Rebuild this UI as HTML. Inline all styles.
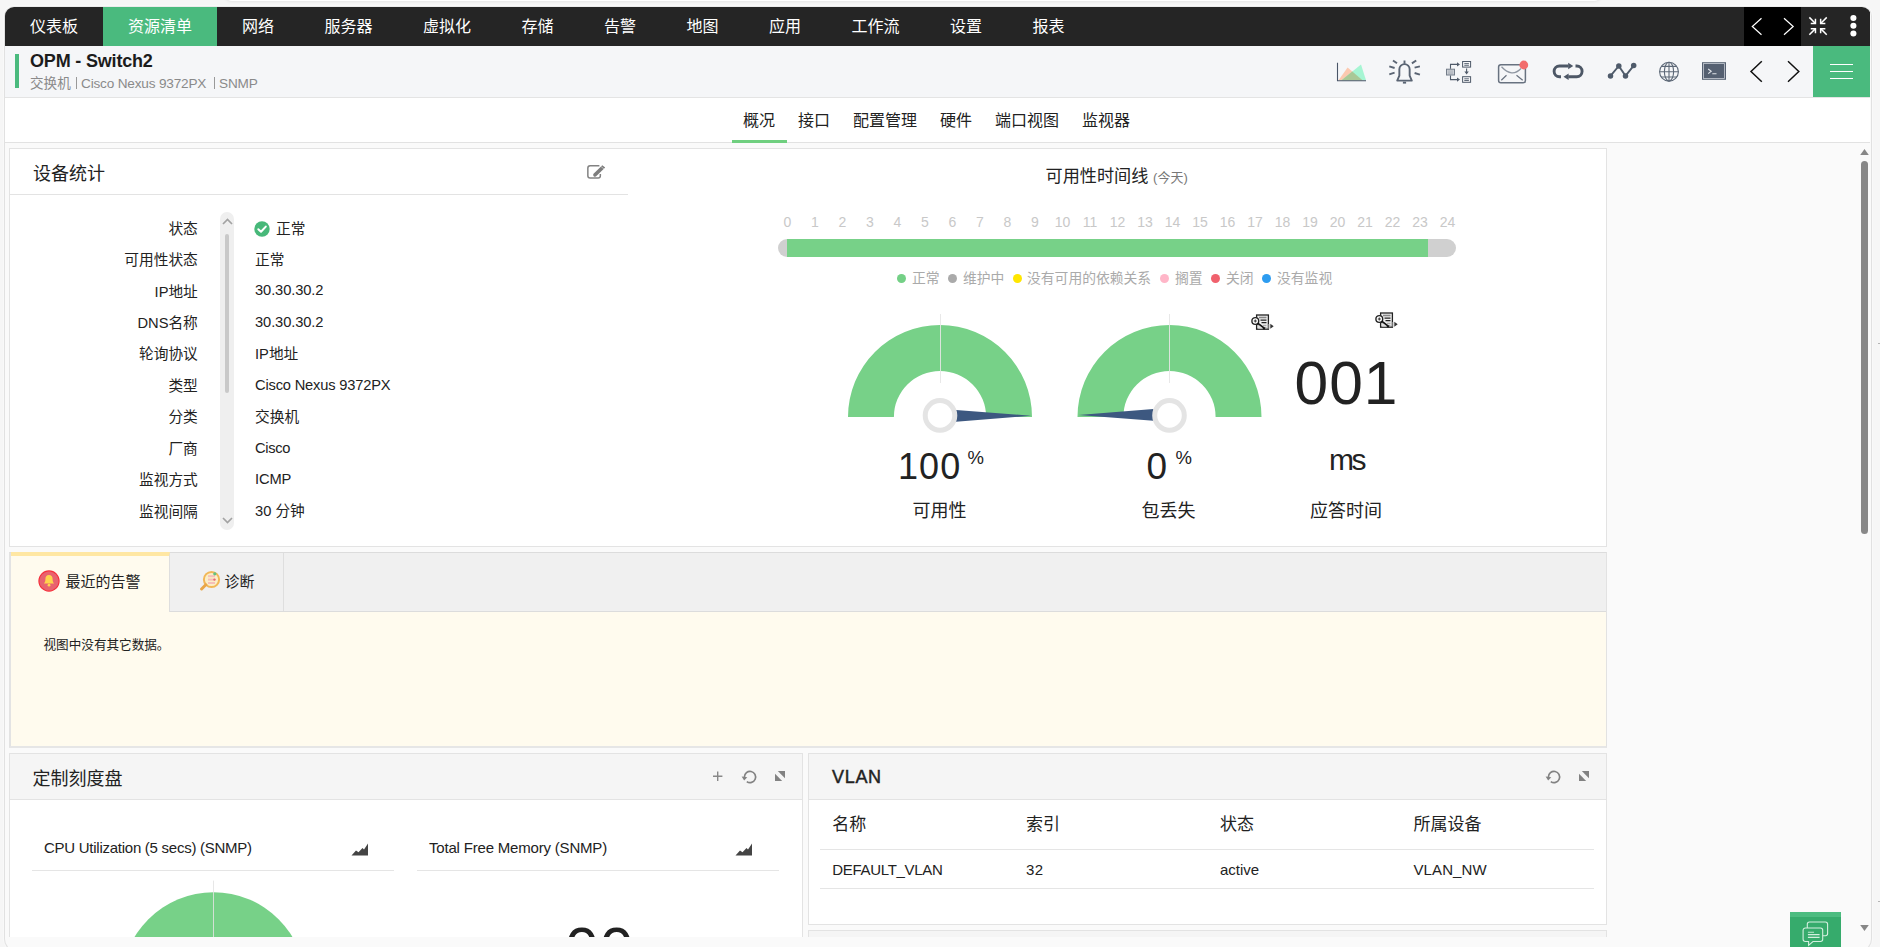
<!DOCTYPE html>
<html lang="zh-CN">
<head>
<meta charset="utf-8">
<title>OPM - Switch2</title>
<style>
*{box-sizing:border-box;margin:0;padding:0}
html,body{width:1880px;height:947px;overflow:hidden;background:#f6f6f6;}
body{font-family:"Liberation Sans","Noto Sans CJK SC",sans-serif;color:#222;position:relative;font-size:15px}
.abs{position:absolute}
#topbit{position:absolute;left:224px;top:-9px;width:1378px;height:10px;background:#fff;border-radius:0 0 8px 8px;box-shadow:0 1px 3px rgba(0,0,0,.07)}
#frame{position:absolute;left:4px;top:6px;width:1868px;height:946px;border:1px solid #e1e1e1;border-top-color:#ececec;border-radius:10px 10px 13px 13px;background:#fafafa;overflow:hidden;box-shadow:0 0 0 1px rgba(255,255,255,.4)}
#inner{position:absolute;left:0;top:0;width:1865px;height:930px;overflow:hidden;background:#fafafa}
/* nav */
#nav{position:absolute;left:0;top:0;width:1865px;height:39px;background:#252525;color:#fff;font-size:16px;line-height:40px;white-space:nowrap}
#nav .it{position:absolute;top:0;height:39px;padding:0 25px;font-weight:400}
#nav .it.act{background:#4aba7e}
#navr{position:absolute;left:1739px;top:0;width:57px;height:39px;background:#000}
/* header */
#hdr{position:absolute;left:0;top:39px;width:1865px;height:52px;background:#f5f6f8;border-bottom:1px solid #e4e4e4}
#hdr .bar{position:absolute;left:10px;top:8px;width:4px;height:34px;background:#4aba7e}
#hdr .ttl{position:absolute;left:25px;top:2.5px;font-size:18px;font-weight:bold;line-height:24px;color:#1c1c1c;white-space:nowrap;letter-spacing:-0.18px}
#hdr .sub{position:absolute;left:25px;top:29px;font-size:13.6px;line-height:18px;color:#8a8a8a;white-space:nowrap}
#hdr .lat{letter-spacing:-0.18px}
#hdr .sbar{position:absolute;top:30.500px;width:1px;height:12px;background:#999}
#hdr .burger{position:absolute;left:1808px;top:0;width:57px;height:51px;background:#4aba7e}
/* tabs */
#tabs{position:absolute;left:0;top:91px;width:1865px;height:45px;background:#fff;border-bottom:1px solid #e2e2e2;font-size:16px;white-space:nowrap}
#tabs .t{position:absolute;top:0;height:45px;line-height:46px;color:#222}
#tabs .ul{position:absolute;left:727px;top:42px;width:55px;height:3px;background:#6fcf7f}
.panel{position:absolute;background:#fff;border:1px solid #e3e3e3}

/* header icons */
.hic{position:absolute;overflow:visible}
/* panel1 */
#p1{left:4px;top:141px;width:1598px;height:399px}
#p1 .h{position:absolute;left:0;top:0;width:617.5px;height:46px;border-bottom:1px solid #e3e3e3}
.ptitle{position:absolute;font-size:18px;line-height:24px;color:#222;white-space:nowrap}
.row{position:absolute;left:0;width:600px;height:22px;line-height:22px;font-size:14.7px;white-space:nowrap;color:#222}
.row .k{position:absolute;right:412.2px;top:0;text-align:right}
.row .v{position:absolute;left:245px;top:0}
#sb{position:absolute;left:210px;top:63.3px;width:13.5px;height:318px;border-radius:7px;background:#efefef}
#sb .th{position:absolute;left:5px;top:22px;width:4px;height:159px;border-radius:2px;background:#c9c9c9}
.tl{position:absolute;top:64.7px;width:28px;text-align:center;font-size:14px;line-height:16px;color:#c8c8c8}
.lg{position:absolute;top:120.8px;font-size:13.8px;line-height:18px;color:#aaa;white-space:nowrap}
.dot{position:absolute;top:125.2px;width:9px;height:9px;border-radius:50%}
.big{position:absolute;white-space:nowrap;color:#222}
.glab{position:absolute;font-size:18px;line-height:24px;white-space:nowrap;color:#222;text-align:center}
/* alarms */
#p2{left:4px;top:545px;width:1598px;height:196px;background:#fffbee;border:1px solid #e2e2e2;border-left:2px solid #e3e3e3;border-bottom:2px solid #e6e6e6;border-top-color:#dcdcdc}
#p2 .hd{position:absolute;left:0;top:0;width:1595px;height:59px;background:#f0f0f0;border-bottom:1px solid #dcdcdc}
#p2 .t1{position:absolute;left:0;top:-1px;width:159px;height:60px;background:#fffbee;border-top:4px solid #ffe7a3;border-right:1px solid #dedede}
#p2 .t2{position:absolute;left:159px;top:0;width:114px;height:58px;border-right:1px solid #dedede}
.tt{position:absolute;font-size:15px;line-height:20px;white-space:nowrap;color:#222}
/* bottom */
#p3{left:4px;top:746px;width:794px;height:200px}
#p4{left:803px;top:746px;width:799px;height:172px}
#p5{left:803px;top:923px;width:799px;height:60px}
.ph{position:absolute;left:0;top:0;right:0;height:46px;background:#f5f5f5;border-bottom:1px solid #e3e3e3}
.wt{position:absolute;font-size:15px;line-height:20px;white-space:nowrap;color:#222}
.th1{position:absolute;font-size:17px;line-height:24px;color:#222;white-space:nowrap}
.td1{position:absolute;font-size:15px;line-height:20px;color:#222;white-space:nowrap}
.hl{position:absolute;height:1px;background:#e5e5e5}
#chat{position:absolute;left:1785px;top:905px;width:51px;height:45px;background:#36ab6c}
#chat:before{content:"";position:absolute;left:0;top:0;width:51px;height:5px;background:#4cbc80}
#vsb{position:absolute;left:1853px;top:137px;width:12px;height:800px}
</style>
</head>
<body>
<div id="topbit"></div>
<div id="frame">
<div id="inner">
  <div id="nav">
    <div class="it" style="left:0px">仪表板</div>
    <div class="it act" style="left:98px;width:114px">资源清单</div>
    <div class="it" style="left:212px">网络</div>
    <div class="it" style="left:294.5px">服务器</div>
    <div class="it" style="left:393px">虚拟化</div>
    <div class="it" style="left:491.5px">存储</div>
    <div class="it" style="left:574px">告警</div>
    <div class="it" style="left:656.5px">地图</div>
    <div class="it" style="left:739px">应用</div>
    <div class="it" style="left:821.5px">工作流</div>
    <div class="it" style="left:920px">设置</div>
    <div class="it" style="left:1002.5px">报表</div>
    <div id="navr"></div>
  </div>
  <div id="hdr">
    <div class="bar"></div>
    <div class="ttl">OPM - Switch2</div>
    <div class="sub">交换机</div><div class="sbar" style="left:71px"></div><div class="sub lat" style="left:76px">Cisco Nexus 9372PX</div><div class="sbar" style="left:209px"></div><div class="sub lat" style="left:214px">SNMP</div>
    <div class="burger"></div>
  </div>
  <div id="tabs">
    <div class="t" style="left:738px">概况</div>
    <div class="t" style="left:793px">接口</div>
    <div class="t" style="left:848px">配置管理</div>
    <div class="t" style="left:935px">硬件</div>
    <div class="t" style="left:990px">端口视图</div>
    <div class="t" style="left:1077px">监视器</div>
    <div class="ul"></div>
  </div>
  
<div class="panel" id="p1">
  <div class="h"></div>
  <div class="ptitle" style="left:23px;top:12.8px">设备统计</div>
  <svg class="abs" style="left:576px;top:14px" width="22" height="18" viewBox="0 0 22 18"><path d="M13.4 2.750 H4.100 a2.250 2.250 0 0 0 -2.250 2.250 V12.800 a2.250 2.250 0 0 0 2.250 2.250 H12.100 a2.250 2.250 0 0 0 2.250 -2.250 V11" fill="none" stroke="#828282" stroke-width="1.500"/><path d="M7.300 11 L16.300 2.200 L19.200 4.600 L9.900 13.600 L6.900 14.200 Z" fill="#7d7d7d"/><path d="M15 3.500 L17.900 5.900" stroke="#d8d8d8" stroke-width=".7"/><path d="M7.200 12.300 L8.600 13.700 L6.900 14.200 Z" fill="#eee"/></svg>
  
<div class="row" style="top:68.60px"><span class="k">状态</span><span class="v" style="left:266px">正常</span><svg class="abs" style="left:244px;top:3px" width="16" height="16" viewBox="0 0 16 16"><circle cx="8" cy="8" r="7.7" fill="#47b879"/><path d="M4.3 8.2 L7 10.800 L11.800 5.600" fill="none" stroke="#fff" stroke-width="2" stroke-linecap="round" stroke-linejoin="round"/></svg></div>
<div class="row" style="top:100.07px"><span class="k">可用性状态</span><span class="v">正常</span></div>
<div class="row" style="top:131.54px"><span class="k">IP地址</span><span class="v" style="top:-1.3px;letter-spacing:-0.1px;">30.30.30.2</span></div>
<div class="row" style="top:163.01px"><span class="k">DNS名称</span><span class="v" style="top:-1.3px;letter-spacing:-0.1px;">30.30.30.2</span></div>
<div class="row" style="top:194.48px"><span class="k">轮询协议</span><span class="v">IP地址</span></div>
<div class="row" style="top:225.95px"><span class="k">类型</span><span class="v" style="top:-1.3px;letter-spacing:-0.19px;">Cisco Nexus 9372PX</span></div>
<div class="row" style="top:257.42px"><span class="k">分类</span><span class="v">交换机</span></div>
<div class="row" style="top:288.89px"><span class="k">厂商</span><span class="v" style="top:-1.3px;letter-spacing:-0.3px;">Cisco</span></div>
<div class="row" style="top:320.36px"><span class="k">监视方式</span><span class="v" style="top:-1.3px;letter-spacing:-0.1px;">ICMP</span></div>
<div class="row" style="top:351.83px"><span class="k">监视间隔</span><span class="v" style="top:-0.5px;">30 分钟</span></div>
  <div id="sb"><div class="th"></div>
    <svg class="abs" style="left:1.5px;top:6px" width="11" height="7" viewBox="0 0 11 7"><path d="M1 6 L5.500 1.500 L10 6" fill="none" stroke="#a3a3a3" stroke-width="1.700"/></svg>
    <svg class="abs" style="left:1.5px;top:304.500px" width="11" height="7" viewBox="0 0 11 7"><path d="M1 1 L5.500 5.500 L10 1" fill="none" stroke="#a3a3a3" stroke-width="1.700"/></svg>
  </div>
  <div class="abs" style="left:1035.5px;top:15px;font-size:17.15px;line-height:24px;white-space:nowrap;color:#222">可用性时间线 <span style="font-size:13px;color:#777">(今天)</span></div>
  <div class="tl" style="left:763.5px">0</div><div class="tl" style="left:791px">1</div><div class="tl" style="left:818.5px">2</div><div class="tl" style="left:846px">3</div><div class="tl" style="left:873.5px">4</div><div class="tl" style="left:901px">5</div><div class="tl" style="left:928.5px">6</div><div class="tl" style="left:956px">7</div><div class="tl" style="left:983.5px">8</div><div class="tl" style="left:1011px">9</div><div class="tl" style="left:1038.5px">10</div><div class="tl" style="left:1066px">11</div><div class="tl" style="left:1093.5px">12</div><div class="tl" style="left:1121px">13</div><div class="tl" style="left:1148.5px">14</div><div class="tl" style="left:1176px">15</div><div class="tl" style="left:1203.5px">16</div><div class="tl" style="left:1231px">17</div><div class="tl" style="left:1258.5px">18</div><div class="tl" style="left:1286px">19</div><div class="tl" style="left:1313.5px">20</div><div class="tl" style="left:1341px">21</div><div class="tl" style="left:1368.5px">22</div><div class="tl" style="left:1396px">23</div><div class="tl" style="left:1423.5px">24</div>
  <div class="abs" style="left:768px;top:90px;width:678px;height:18px;border-radius:9px;background:#d0d0d0;overflow:hidden"><div class="abs" style="left:8.7px;top:0;width:641.3px;height:18px;background:#77d188"></div></div>
  <div class="dot" style="left:886.5px;background:#74d086"></div><div class="lg" style="left:902px">正常</div><div class="dot" style="left:937.5px;background:#aaaaaa"></div><div class="lg" style="left:953px">维护中</div><div class="dot" style="left:1002.5px;background:#ffe600"></div><div class="lg" style="left:1017px">没有可用的依赖关系</div><div class="dot" style="left:1149.5px;background:#ffb6c8"></div><div class="lg" style="left:1165px">搁置</div><div class="dot" style="left:1200.5px;background:#f0616d"></div><div class="lg" style="left:1216px">关闭</div><div class="dot" style="left:1251.5px;background:#2d9cf0"></div><div class="lg" style="left:1267px">没有监视</div>
  <svg class="abs" style="left:0;top:0" width="1596" height="397" viewBox="0 0 1596 397"><path d="M838 268 A92 92 0 0 1 1022 268 L976.1 268 A46.1 46.1 0 0 0 883.9 268 Z" fill="#77d188"/><line x1="930.5" y1="165" x2="930.5" y2="234" stroke="#e6e6e6" stroke-opacity="0.9" stroke-width="1"/><path d="M946 261 L1021 266.7 L946 272.7 Z" fill="#3d5880"/><circle cx="930" cy="266.4" r="14.8" fill="#fff" stroke="#e4e4e4" stroke-width="5"/><path d="M1067.5 268 A92 92 0 0 1 1251.5 268 L1205.6 268 A46.1 46.1 0 0 0 1113.4 268 Z" fill="#77d188"/><line x1="1159.5" y1="165" x2="1159.5" y2="234" stroke="#e6e6e6" stroke-opacity="0.9" stroke-width="1"/><path d="M1143.5 260.1 L1068.5 266.1 L1143.5 271.8 Z" fill="#3d5880"/><circle cx="1159.5" cy="266.4" r="14.8" fill="#fff" stroke="#e4e4e4" stroke-width="5"/></svg>
  <svg class="abs" style="left:1240.5px;top:165.3px" width="24" height="17" viewBox="0 0 24 17"><rect x="5.6" y="1" width="11.8" height="14.2" fill="#f0f0f0" stroke="#222" stroke-width="1.3"/><path d="M8 3.500 H15.500" stroke="#888" stroke-width="1.600"/><path d="M9.500 6.200 H15.500 M10.500 8.700 H15.500" stroke="#222" stroke-width="1.300"/><path d="M12 11.300 H15.500 M13 13.300 H15.500" stroke="#999" stroke-width="1"/><circle cx="4.300" cy="7" r="3.400" fill="#fff" stroke="#222" stroke-width="1.400"/><path d="M2.800 7 H5.800 M4.300 5.500 V8.500" stroke="#333" stroke-width="1"/><path d="M6.600 9.500 L13.800 14.800" stroke="#111" stroke-width="2.200"/><path d="M7.200 10.500 L7.200 14.600 L12.300 14.600 Z" fill="#ddd"/><path d="M19.300 9.800 L22.700 12.300 L19.300 14.800 Z" fill="#333"/><path d="M17.800 10 V14.800" stroke="#999" stroke-width="1"/></svg><svg class="abs" style="left:1365.4px;top:163.4px" width="24" height="17" viewBox="0 0 24 17"><rect x="5.6" y="1" width="11.8" height="14.2" fill="#f0f0f0" stroke="#222" stroke-width="1.3"/><path d="M8 3.500 H15.500" stroke="#888" stroke-width="1.600"/><path d="M9.500 6.200 H15.500 M10.500 8.700 H15.500" stroke="#222" stroke-width="1.300"/><path d="M12 11.300 H15.500 M13 13.300 H15.500" stroke="#999" stroke-width="1"/><circle cx="4.300" cy="7" r="3.400" fill="#fff" stroke="#222" stroke-width="1.400"/><path d="M2.800 7 H5.800 M4.300 5.500 V8.500" stroke="#333" stroke-width="1"/><path d="M6.600 9.500 L13.800 14.800" stroke="#111" stroke-width="2.200"/><path d="M7.200 10.500 L7.200 14.600 L12.300 14.600 Z" fill="#ddd"/><path d="M19.300 9.800 L22.700 12.300 L19.300 14.800 Z" fill="#333"/><path d="M17.800 10 V14.800" stroke="#999" stroke-width="1"/></svg>
  <div class="big" style="left:888px;top:295.7px;font-size:36px;line-height:44px;letter-spacing:1.1px">100</div>
  <div class="big" style="left:957.5px;top:295.5px;font-size:18.5px;line-height:26px">%</div>
  <div class="glab" style="left:902.5px;top:350px">可用性</div>
  <div class="big" style="left:1136.5px;top:295.7px;font-size:37px;line-height:44px">0</div>
  <div class="big" style="left:1165.5px;top:295.5px;font-size:18.5px;line-height:26px">%</div>
  <div class="glab" style="left:1131.5px;top:350px">包丢失</div>
  <div class="big" style="left:1284.5px;top:199px;font-size:60.5px;line-height:70px;letter-spacing:1px">001</div>
  <div class="big" style="left:1319px;top:291.3px;font-size:30px;line-height:40px;letter-spacing:-2.5px">ms</div>
  <div class="glab" style="left:1300px;top:350px">应答时间</div>
</div>


<div class="panel" id="p2">
  <div class="hd"></div>
  <div class="t1"></div>
  <div class="t2"></div>
  <svg class="abs" style="left:27px;top:17.4px" width="22" height="22" viewBox="0 0 22 22"><circle cx="11" cy="11" r="10.1" fill="#e8636f" stroke="#f5303c" stroke-width="1.1"/><path d="M11 5 c-2.6 0 -3.6 2 -3.6 4.2 c0 2.6 -0.8 3.6 -1.6 4.4 h10.4 c-0.8 -0.8 -1.6 -1.8 -1.6 -4.4 c0 -2.2 -1 -4.2 -3.6 -4.2 z" fill="#ffd34d"/><circle cx="11" cy="15.2" r="1.4" fill="#ffd34d"/></svg>
  <div class="tt" style="left:54.5px;top:19px">最近的告警</div>
  <svg class="abs" style="left:187.5px;top:16px;opacity:.85" width="24" height="24" viewBox="0 0 24 24"><circle cx="12.5" cy="10.5" r="7.6" fill="#fdeec0" stroke="#f3ae3d" stroke-width="2"/><path d="M6.8 15.8 L2.6 20" stroke="#e89a2a" stroke-width="3" stroke-linecap="round"/><rect x="9" y="6.2" width="7" height="2" fill="#f7b7b0"/><rect x="9" y="9.6" width="7" height="2" fill="#f7b7b0"/><rect x="9" y="13" width="7" height="2" fill="#f7b7b0"/><circle cx="15.8" cy="4.8" r="1.6" fill="#4cba6f"/><circle cx="15.5" cy="10.6" r="1.2" fill="#e8505b"/></svg>
  <div class="tt" style="left:213.5px;top:18.7px">诊断</div>
  <div class="abs" style="left:32.500px;top:83.3px;font-size:12.6px;line-height:18px;color:#222;white-space:nowrap">视图中没有其它数据。</div>
</div>

<div class="panel" id="p3">
  <div class="ph"></div>
  <div class="ptitle" style="left:22.5px;top:13.1px">定制刻度盘</div>
<svg class="abs" style="left:701px;top:16px" width="14" height="14" viewBox="0 0 14 14"><path d="M6.700 1.500 V10.900 M2 6.200 H11.400" stroke="#888" stroke-width="1.400" fill="none"/></svg><svg class="abs" style="left:730.7px;top:13.6px" width="18" height="18" viewBox="0 0 18 18"><path d="M3.4 9 A5.600 5.600 0 1 1 5.800 13.600" fill="none" stroke="#828282" stroke-width="1.700"/><path d="M0.600 8.400 L6.300 9.200 L3.150 12.500 Z" fill="#828282"/></svg><svg class="abs" style="left:763.9px;top:16.1px" width="12" height="12" viewBox="0 0 12 12"><path d="M3.800 1 H11 V8.200 Z" fill="#828282"/><path d="M1 3.800 V11 H8.200 Z" fill="#828282"/></svg>
  <div class="wt" style="left:34px;top:83.6px;letter-spacing:-0.26px">CPU Utilization (5 secs) (SNMP)</div>
<svg class="abs" style="left:340.7px;top:88px" width="18" height="14" viewBox="0 0 18 14"><path d="M0.500 13.500 L5 8.500 L7.500 10.200 L11.500 6 L13 7.500 L17 1.500 V13.500 Z" fill="#444"/></svg>  <div class="hl" style="left:22px;top:116px;width:362px"></div>
  <div class="wt" style="left:419px;top:83.6px;letter-spacing:-0.19px">Total Free Memory (SNMP)</div>
<svg class="abs" style="left:725px;top:88px" width="18" height="14" viewBox="0 0 18 14"><path d="M0.500 13.500 L5 8.500 L7.500 10.200 L11.500 6 L13 7.500 L17 1.500 V13.500 Z" fill="#444"/></svg>  <div class="hl" style="left:407px;top:116px;width:362px"></div>
  <svg class="abs" style="left:100px;top:121px" width="210" height="80" viewBox="0 0 210 80"><path d="M11.5 109.200 A92 92 0 0 1 195.500 109.200 Z" fill="#77d188"/><line x1="103.500" y1="5.600" x2="103.500" y2="80" stroke="#e3e3e3" stroke-opacity=".85"/></svg>
  <div class="big" style="left:555px;top:159.5px;font-size:60.5px;line-height:70px;letter-spacing:1px">00</div>
</div>

<div class="panel" id="p4">
  <div class="ph"></div>
  <div class="ptitle" style="left:23px;top:11.1px;-webkit-text-stroke:0.45px #222;letter-spacing:0.7px">VLAN</div>
<svg class="abs" style="left:736px;top:13.6px" width="18" height="18" viewBox="0 0 18 18"><path d="M3.4 9 A5.600 5.600 0 1 1 5.800 13.600" fill="none" stroke="#828282" stroke-width="1.700"/><path d="M0.600 8.400 L6.300 9.200 L3.150 12.500 Z" fill="#828282"/></svg><svg class="abs" style="left:768.8px;top:16.1px" width="12" height="12" viewBox="0 0 12 12"><path d="M3.800 1 H11 V8.200 Z" fill="#828282"/><path d="M1 3.800 V11 H8.200 Z" fill="#828282"/></svg>
  <div class="th1" style="left:23.3px;top:59.3px">名称</div>  <div class="th1" style="left:217px;top:59.3px">索引</div>  <div class="th1" style="left:411px;top:59.3px">状态</div>  <div class="th1" style="left:604.5px;top:59.3px">所属设备</div>
  <div class="hl" style="left:11px;top:95px;width:774px"></div>
  <div class="td1" style="left:23.3px;top:106px;letter-spacing:-0.31px">DEFAULT_VLAN</div>  <div class="td1" style="left:217px;top:106px;letter-spacing:0.3px">32</div>  <div class="td1" style="left:411px;top:106px;letter-spacing:0px">active</div>  <div class="td1" style="left:604.5px;top:106px;letter-spacing:0.1px">VLAN_NW</div>
  <div class="hl" style="left:11px;top:134px;width:774px"></div>
</div>
<div class="panel" id="p5"><div class="ph"></div></div>

<svg class="abs" style="left:0;top:0;pointer-events:none" width="1865" height="98" viewBox="5 7 1865 98"><path d="M1761.5 18.2 L1752.3 26.5 L1761.5 34.8" fill="none" stroke="#fff" stroke-width="1.2"/><path d="M1784 18.2 L1793.2 26.5 L1784 34.8" fill="none" stroke="#fff" stroke-width="1.2"/><path d="M1809.35 17.35 L1815.45 23.45" stroke="#fff" stroke-width="1.5" fill="none"/><path d="M1810.75 23.45 L1815.45 23.45 L1815.45 18.75" stroke="#fff" stroke-width="1.5" fill="none"/><path d="M1826.75 17.35 L1820.65 23.45" stroke="#fff" stroke-width="1.5" fill="none"/><path d="M1825.35 23.45 L1820.65 23.45 L1820.65 18.75" stroke="#fff" stroke-width="1.5" fill="none"/><path d="M1809.35 34.75 L1815.45 28.65" stroke="#fff" stroke-width="1.5" fill="none"/><path d="M1810.75 28.65 L1815.45 28.65 L1815.45 33.35" stroke="#fff" stroke-width="1.5" fill="none"/><path d="M1826.75 34.75 L1820.65 28.65" stroke="#fff" stroke-width="1.5" fill="none"/><path d="M1825.35 28.65 L1820.65 28.65 L1820.65 33.35" stroke="#fff" stroke-width="1.5" fill="none"/><circle cx="1853.4" cy="18" r="3.05" fill="#fff"/><circle cx="1853.4" cy="25.75" r="3.05" fill="#fff"/><circle cx="1853.4" cy="33.5" r="3.05" fill="#fff"/><rect x="1830" y="64" width="23" height="1" fill="#fff"/><rect x="1830" y="71" width="23" height="1" fill="#fff"/><rect x="1830" y="78" width="23" height="1" fill="#fff"/><path d="M1761.8 61.3 L1751 71.5 L1761.8 81.7" fill="none" stroke="#111" stroke-width="1.5"/><path d="M1788 61.3 L1798.8 71.5 L1788 81.7" fill="none" stroke="#111" stroke-width="1.5"/><path d="M1338.5 80.3 L1347.6 67.6 L1362.5 80.3 Z" fill="#fcc9b0"/><path d="M1341.5 80.3 L1361 64.6 L1366 80.3 Z" fill="#a6f5d3"/><path d="M1341.5 80.3 L1352.3 71.6 L1362.5 80.3 Z" fill="#a9c896"/><path d="M1337.5 62.7 V80.7 H1366" fill="none" stroke="#4a5568" stroke-width="1.1"/><path d="M1397.2 80.600 L1399.350 75.600 V69.300 A5.150 5.150 0 0 1 1409.650 69.300 V75.600 L1411.800 80.600 Z" fill="none" stroke="#5a6473" stroke-width="1.900" stroke-linejoin="round"/><path d="M1404.500 60.600 V63.800" stroke="#5a6473" stroke-width="1.900"/><path d="M1393 60.5 L1397 63.2" stroke="#5a6473" stroke-width="1.900"/><path d="M1389.3 66.4 L1394.6 68" stroke="#5a6473" stroke-width="1.900"/><path d="M1389.3 74.3 L1394.6 72.7" stroke="#5a6473" stroke-width="1.900"/><path d="M1411.9 63.4 L1416.2 60.5" stroke="#5a6473" stroke-width="1.900"/><path d="M1414.6 67.7 L1419.9 66.4" stroke="#5a6473" stroke-width="1.900"/><path d="M1414.6 73 L1419.9 74.6" stroke="#5a6473" stroke-width="1.900"/><rect x="1402.900" y="81.700" width="3.200" height="1.900" fill="#5a6473"/><rect x="1446.500" y="69.200" width="8" height="5.800" fill="#c9cdd3" stroke="#737c89" stroke-width="1"/><path d="M1448 71 H1453 M1448 72.300 H1453 M1448 73.600 H1453" stroke="#a4aab3" stroke-width=".6"/><rect x="1462.6" y="61.5" width="8" height="5.6" fill="none" stroke="#4f5a69" stroke-width="1"/><path d="M1464.3 63.6 H1468.9 M1464.3 65.3 H1468.9" stroke="#4f5a69" stroke-width=".9"/><rect x="1462.6" y="76.7" width="8" height="5.6" fill="none" stroke="#4f5a69" stroke-width="1"/><path d="M1464.3 78.8 H1468.9 M1464.3 80.5 H1468.9" stroke="#4f5a69" stroke-width=".9"/><path d="M1450.5 68.7 V64.4 H1457.5" fill="none" stroke="#4f5a69" stroke-width="1.1"/><path d="M1457 62.2 L1460 64.4 L1457 66.6 Z" fill="#4f5a69"/><path d="M1450.5 75.5 V79.6 H1457.5" fill="none" stroke="#4f5a69" stroke-width="1.1"/><path d="M1457 77.4 L1460 79.6 L1457 81.8 Z" fill="#4f5a69"/><path d="M1466.6 68.5 V72" fill="none" stroke="#4f5a69" stroke-width="1.1"/><path d="M1464.4 71.6 L1466.6 74.6 L1468.8 71.6 Z" fill="#4f5a69"/><rect x="1498.600" y="64.700" width="26.800" height="18" rx="2.300" fill="none" stroke="#687280" stroke-width="1.500"/><path d="M1501.500 66.800 Q1512 78 1521 68.500" fill="none" stroke="#8f97a2" stroke-width="1.300"/><path d="M1501.300 80.300 L1506.500 75.200 M1522.700 80.300 L1516.500 75.200" stroke="#6a7380" stroke-width="1.200"/><circle cx="1523.8" cy="65" r="4.4" fill="#f26c6c"/><path d="M1561 76.700 H1559.450 a5.350 5.350 0 0 1 0 -10.700 H1568.500" fill="none" stroke="#4d5766" stroke-width="2.900"/><path d="M1568.200 62.800 L1573.200 66 L1568.200 69.200 Z" fill="#4d5766"/><path d="M1575.500 66 H1576.750 a5.350 5.350 0 0 1 0 10.700 H1568.300" fill="none" stroke="#4d5766" stroke-width="2.900"/><path d="M1568.600 73.500 L1563.500 76.700 L1568.600 79.900 Z" fill="#4d5766"/><path d="M1610.5 75.9 L1618.8 66 L1625.5 75.9 L1633.7 65.6" fill="none" stroke="#4f5b6b" stroke-width="1.9"/><circle cx="1610.5" cy="75.9" r="2.750" fill="#4f5b6b"/><circle cx="1618.8" cy="66" r="2.750" fill="#4f5b6b"/><circle cx="1625.5" cy="75.9" r="2.750" fill="#4f5b6b"/><circle cx="1633.7" cy="65.6" r="2.750" fill="#4f5b6b"/><g fill="none" stroke="#5d6877" stroke-width="1.1"><circle cx="1669" cy="71.700" r="9.400"/><ellipse cx="1669" cy="71.700" rx="4.600" ry="9.400"/><path d="M1669 62.300 V81.100 M1659.600 71.700 H1678.400 M1661.300 66.400 H1676.700 M1661.300 77 H1676.700"/></g><rect x="1702" y="62.2" width="24" height="17.6" fill="#556071"/><rect x="1703.4" y="63.6" width="21.2" height="14.8" fill="none" stroke="#c9ced6" stroke-width=".8"/><path d="M1708.2 69 L1711.2 71.3 L1708.2 73.6" fill="none" stroke="#dfe3e8" stroke-width="1.1"/><path d="M1712.3 73.8 H1716.5" stroke="#dfe3e8" stroke-width="1.1"/></svg><svg class="abs" style="left:1853px;top:137px" width="12" height="800" viewBox="1858 144 12 800"><path d="M1860.2 155 L1864.5 149 L1868.8 155 Z" fill="#878787"/><rect x="1861" y="161" width="7" height="373" rx="3.5" fill="#888"/><path d="M1860.2 925 L1868.8 925 L1864.5 931 Z" fill="#878787"/></svg>
</div>
<div id="chat"><svg class="abs" style="left:11px;top:8px" width="30" height="30" viewBox="0 0 30 30"><rect x="6.300" y="2" width="20.300" height="13.800" rx="2.200" fill="none" stroke="#d4efdf" stroke-width="1.100"/><path d="M4.300 8 H19.500 a2.200 2.200 0 0 1 2.200 2.200 V19.300 a2.200 2.200 0 0 1 -2.200 2.200 H12 L7.600 25.400 V21.500 H4.300 a2.200 2.200 0 0 1 -2.200 -2.200 V10.200 a2.200 2.200 0 0 1 2.200 -2.200 Z" fill="#36ab6c" stroke="#d4efdf" stroke-width="1.100"/><path d="M6.900 12.300 H13" stroke="#bfe6cf" stroke-width="1.100"/><path d="M6.900 14.600 H18.600 M6.900 17.400 H18.600" stroke="#d4efdf" stroke-width="1.100"/></svg></div>
</div>
<div class="abs" style="left:1878px;top:343px;width:2px;height:1px;background:#b5b5b5"></div><div class="abs" style="left:1878px;top:901px;width:2px;height:1px;background:#b5b5b5"></div>
</body>
</html>
